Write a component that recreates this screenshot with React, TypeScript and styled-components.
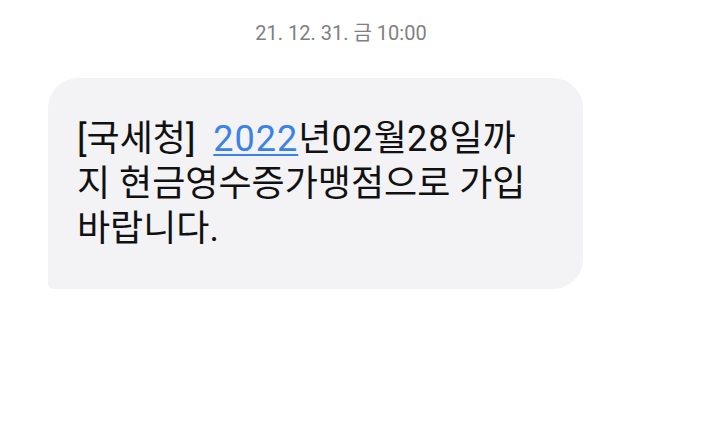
import React from "react";
import styled, { createGlobalStyle } from "styled-components";

const Global = createGlobalStyle`
  html, body { margin: 0; padding: 0; background: #ffffff; }
  body { font-family: Roboto, "Noto Sans CJK KR", sans-serif; }
`;

const Page = styled.div`
  width: 720px;
  height: 431px;
  display: flex;
  flex-direction: column;
  background: #ffffff;
`;

const DateLabel = styled.div`
  margin-top: 21px;
  height: 24px;
  line-height: 24px;
  text-align: center;
  font-size: 20px;
  color: #808080;
  font-family: Roboto, "Noto Sans CJK KR", sans-serif;
  padding-right: 38px;
`;

const Row = styled.div`
  display: flex;
  padding-left: 48px;
  margin-top: 33px;
`;

const Bubble = styled.div`
  width: 535px;
  box-sizing: border-box;
  background: #f3f3f5;
  border-radius: 30px 30px 30px 5px;
  padding: 39px 10px 37px 29px;
  font-size: 36px;
  line-height: 45px;
  color: #111111;
  font-family: Roboto, "Noto Sans CJK KR", sans-serif;
  white-space: nowrap;
`;

const Num = styled.span`
  letter-spacing: 1px;
`;

const Link = styled.span`
  color: #3b82e8;
  letter-spacing: 1px;
  text-decoration: underline;
  text-underline-offset: 3px;
  text-decoration-thickness: 2px;
`;

export default function App() {
  return (
    <Page>
      <Global />
      <DateLabel>21. 12. 31. 금 10:00</DateLabel>
      <Row>
        <Bubble>
          [국세청]&nbsp; <Link>2022</Link>년<Num>02</Num>월<Num>28</Num>일까
          <br />
          지 현금영수증가맹점으로 가입
          <br />
          바랍니다.
        </Bubble>
      </Row>
    </Page>
  );
}
